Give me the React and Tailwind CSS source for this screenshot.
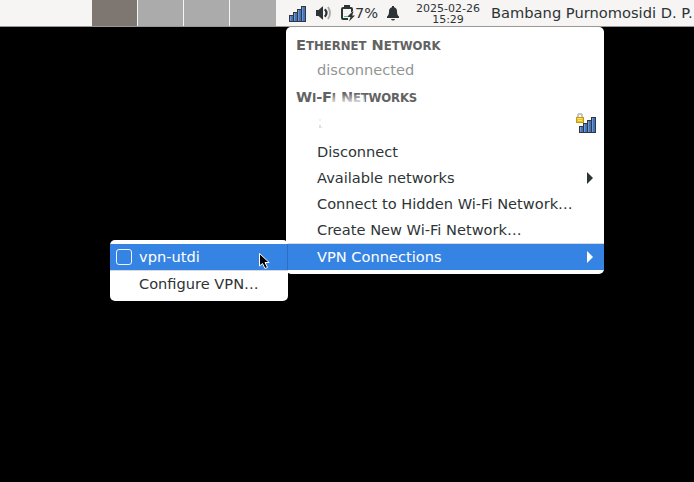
import React from "react";

function Bars({ className }) {
  return (
    <svg className={className} width="17" height="16" viewBox="0 0 17 16" shapeRendering="crispEdges">
      {[[0, 9], [4, 6], [8, 3], [12, 0]].map(([x, y]) => (
        <g key={x}>
          <rect x={x} y={y} width="5" height={16 - y} fill="#33363b" />
          <rect x={x + 1} y={y + 1} width="3" height={14 - y} fill="#4273bd" />
          <rect x={x + 1} y={y + 1} width="1" height={14 - y} fill="#6f99d6" />
        </g>
      ))}
    </svg>
  );
}

function Lock() {
  return (
    <svg className="absolute left-0 top-0" width="8" height="10" viewBox="0 0 8 10" shapeRendering="crispEdges">
      <path d="M1 4V1h1V0h4v1h1v3H5V2H3v2z" fill="#c3c5c8" />
      <rect y="4" width="8" height="6" fill="#c79a08" />
      <rect x="1" y="5" width="6" height="4" fill="#e8c32c" />
      <path d="M1 5h5v1H1zM2 7h4v1H2z" fill="#f9e27a" />
    </svg>
  );
}

function Volume() {
  return (
    <svg width="18" height="16" viewBox="0 0 18 16" fill="none">
      <path d="M1 5h2.500L7.500 1.500H8v13h-.5L3.500 11H1z" fill="#2e3436" />
      <path d="M9.800 4.300q3.400 3.700 0 7.400" stroke="#2e3436" strokeWidth="2.200" />
      <path d="M13 2q4 6 0 12" stroke="#a8a8a8" strokeWidth="1.800" />
    </svg>
  );
}

function Battery() {
  return (
    <svg width="16" height="17" viewBox="0 0 16 17">
      <path d="M8 14H3Q2 14 2 13V4Q2 3 3 3h8q1 0 1 1v4" fill="none" stroke="#2e3436" strokeWidth="2" />
      <path d="M4 0h6v3H4z" fill="#2e3436" />
      <path d="M4 11h4v1H4z" fill="#33d17a" />
      <path
        d="M12.500 6.500L7 12h3.500L9 16.500l6-6h-2.800L13.500 6.500z"
        fill="#2e3436"
        stroke="#f6f5f4"
        strokeWidth="1"
        paintOrder="stroke"
      />
    </svg>
  );
}

function Bell() {
  return (
    <svg width="14" height="15" viewBox="0 0 14 15" fill="#2e3436">
      <path d="M6 0h2v1.300c2 .4 3 2 3 4 0 3 .6 4.200 2 5.300V12H1v-1.400C2.400 9.500 3 8.300 3 5.300c0-2 1-3.600 3-4zM5 13h4q-.4 1.500-2 1.500T5 13z" />
    </svg>
  );
}

function Arrow() {
  return (
    <svg className="absolute right-[11px] top-[7px]" width="6" height="12" viewBox="0 0 6 12" fill="currentColor">
      <path d="M0 0l6 6-6 6z" />
    </svg>
  );
}

function Heading({ children }) {
  return <div className="h-[26px] pl-[10px] text-[14.6px] leading-[26px] font-bold text-[#626262]">{children}</div>;
}

function Small({ children }) {
  return <span className="text-[11.7px]">{children}</span>;
}

function Item({ children, arrow }) {
  return (
    <div className="relative h-[26px] pl-[31px] leading-[26px]">
      {children}
      {arrow && <Arrow />}
    </div>
  );
}

export default function App() {
  return (
    <div className="relative h-[482px] w-[694px] overflow-hidden bg-black font-['DejaVu_Sans',sans-serif] text-[14.6px] whitespace-nowrap text-[#2e3436]">
      <header className="flex h-[27px] border-b border-[#999896] bg-[#f6f5f4]">
        <div className="ml-[92px] flex gap-px">
          <div className="w-[45px] bg-[#7e7771]" />
          <div className="w-[45px] bg-[#ababab]" />
          <div className="w-[45px] bg-[#ababab]" />
          <div className="w-[46px] bg-[#ababab]" />
        </div>
        <div className="flex w-[140px] pl-[13px]">
          <Bars className="mt-[6px]" />
          <div className="mt-[5px] ml-[9px]"><Volume /></div>
          <div className="mt-[5px] ml-[7px]"><Battery /></div>
          <span className="-ml-px w-[24px] leading-[26px]">7%</span>
          <div className="mt-[6px] ml-[7px]"><Bell /></div>
        </div>
        <div className="w-[64px] pt-[3px] text-center text-[11px] leading-[11px]">
          <div>2025-02-26</div>
          <div>15:29</div>
        </div>
        <div className="ml-[11px] text-[14.67px] leading-[26px]">Bambang Purnomosidi D. P.</div>
      </header>

      <div className="absolute top-[27px] left-[286px] h-[247px] w-[318px] rounded-[5px] bg-white pt-[5px]">
        <Heading>E<Small>THERNET</Small> N<Small>ETWORK</Small></Heading>
        <div className="h-[26px] pl-[31px] leading-[24px] text-[#929595]">disconnected</div>
        <div className="relative tracking-[-0.17px]">
          <Heading>W<Small>I</Small>-F<Small>I</Small> N<Small>ETWORKS</Small></Heading>
          <div className="absolute top-[9px] left-[47px] h-[11px] w-[32px] bg-linear-to-b from-white/0 to-white/90" />
        </div>
        <div className="relative h-[29px]">
          <div className="absolute top-[9px] left-[33px] h-[2px] w-[2px] bg-[#f0f0f0]" />
          <div className="absolute top-[15px] left-[33px] h-[3px] w-[2px] bg-[#dedede]" />
          <div className="absolute top-[17px] left-[35px] h-px w-[2px] bg-[#efefef]" />
          <div className="absolute top-[3px] left-[290px] h-[20px] w-[20px]">
            <Bars className="absolute top-[4px] left-[3px]" />
            <Lock />
          </div>
        </div>
        <Item>Disconnect</Item>
        <Item arrow>Available networks</Item>
        <Item>Connect to Hidden Wi-Fi Network…</Item>
        <Item>Create New Wi-Fi Network…</Item>
        <div className="border-t border-[#d8d8d8] bg-[#3584e4] text-white"><Item arrow>VPN Connections</Item></div>
      </div>

      <div className="absolute top-[240px] left-[110px] h-[61px] w-[178px] rounded-[5px] bg-white pt-[4px]">
        <div className="flex h-[26px] items-center border-r border-[#2c6fc0] bg-[#3584e4] pl-[6px] text-white">
          <span className="h-4 w-4 rounded-[3px] border border-white/90" />
          <span className="ml-[7px]">vpn-utdi</span>
        </div>
        <div className="h-[27px] border-t border-[#d8d8d8] pl-[29px] leading-[26px]">Configure VPN…</div>
      </div>

      <svg className="absolute top-[253px] left-[259px]" width="11" height="17" viewBox="0 0 11 17">
        <path d="M.5.500V13l3-2.500L6 15.500l2.500-1L6 9.500h4.200z" fill="#000" stroke="#fff" />
      </svg>
    </div>
  );
}
